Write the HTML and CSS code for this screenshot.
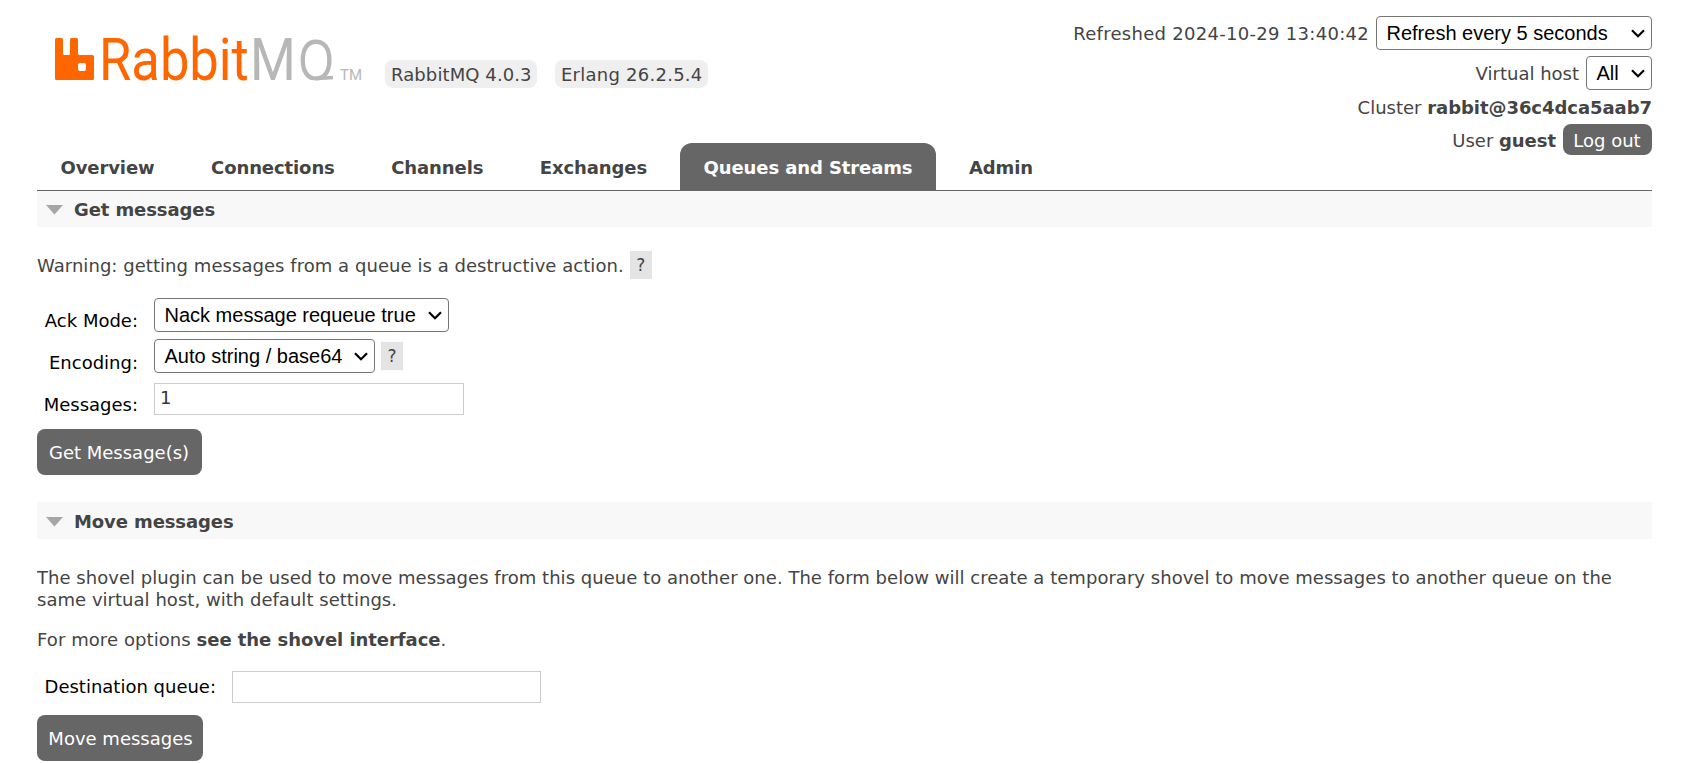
FILE: index.html
```html
<!DOCTYPE html>
<html lang="en">
<head>
<meta charset="utf-8">
<title>RabbitMQ Management</title>
<link rel="stylesheet" href="styles.css">
</head>
<body>
<header class="header">
  <div class="header-main">
    <div class="brand">
      <svg class="logo" width="308" height="46" viewBox="0 0 308 46" role="img" aria-label="RabbitMQ">
        <path fill="#f60" fill-rule="evenodd" d="M1.500 2h5q1.500 0 1.500 1.500v14q0 1.500 1.500 1.500h4q1.500 0 1.500-1.500v-14q0-1.500 1.500-1.500h5q1.500 0 1.500 1.500v14q0 1.500 1.500 1.500h13q1.500 0 1.500 1.500v22q0 1.500-1.500 1.500h-36q-1.500 0-1.500-1.500v-39q0-1.500 1.500-1.500zM25 27q-2 0-2 2v4q0 2 2 2h4q2 0 2-2v-4q0-2-2-2z"/>
        <g transform="translate(44 44) scale(.89 1)"><text class="logo-name"><tspan fill="#f60">Rabbit</tspan><tspan fill="#b7b7b7" dx="1.500">M</tspan></text></g>
        <clipPath id="q-clip"><rect x="240" y="-2" width="45" height="46.500"/></clipPath>
        <g clip-path="url(#q-clip)"><g transform="translate(243.500 43.500) scale(.78 1)"><text class="logo-q" fill="#b7b7b7">Q</text></g></g>
        <path d="M261 42.300h6l11-.8" fill="none" stroke="#b7b7b7" stroke-width="3.600"/>
        <text class="logo-tm" x="285" y="44" fill="#b7b7b7">TM</text>
      </svg>
      <span class="version v-server">RabbitMQ 4.0.3</span>
      <span class="version v-erlang">Erlang 26.2.5.4</span>
    </div>
    <nav class="tabs">
      <a class="tab">Overview</a>
      <a class="tab">Connections</a>
      <a class="tab">Channels</a>
      <a class="tab">Exchanges</a>
      <a class="tab selected">Queues and Streams</a>
      <a class="tab">Admin</a>
    </nav>
  </div>
  <div class="status">
    <div class="status-row">
      <span class="refreshed">Refreshed 2024-10-29 13:40:42</span>
      <span class="select w-refresh">Refresh every 5 seconds<svg class="chevron" width="14" height="9" viewBox="0 0 14 9"><path d="M1 1.200l6 6 6-6"/></svg></span>
    </div>
    <div class="status-row">
      <span>Virtual host</span>
      <span class="select w-vhost">All<svg class="chevron" width="14" height="9" viewBox="0 0 14 9"><path d="M1 1.200l6 6 6-6"/></svg></span>
    </div>
    <div class="status-row cluster"><span>Cluster <b>rabbit@36c4dca5aab7</b></span></div>
    <div class="status-row user"><span>User <b>guest</b></span><button class="logout">Log out</button></div>
  </div>
</header>
<main>
  <h2 class="section-title"><svg class="triangle" width="17" height="10" viewBox="0 0 17 10"><path d="M0 0h17l-8.500 9.500z"/></svg>Get messages</h2>
  <p class="warning">Warning: getting messages from a queue is a destructive action. <span class="help">?</span></p>
  <div class="form">
    <div class="row row-ack"><label>Ack Mode:</label><span class="select w-ack">Nack message requeue true<svg class="chevron" width="14" height="9" viewBox="0 0 14 9"><path d="M1 1.200l6 6 6-6"/></svg></span></div>
    <div class="row row-enc"><label>Encoding:</label><span class="select w-enc">Auto string / base64<svg class="chevron" width="14" height="9" viewBox="0 0 14 9"><path d="M1 1.200l6 6 6-6"/></svg></span><span class="help">?</span></div>
    <div class="row row-count"><label>Messages:</label><input class="count" type="text" value="1"></div>
  </div>
  <button class="action get">Get Message(s)</button>
  <h2 class="section-title second"><svg class="triangle" width="17" height="10" viewBox="0 0 17 10"><path d="M0 0h17l-8.500 9.500z"/></svg>Move messages</h2>
  <p class="shovel">The shovel plugin can be used to move messages from this queue to another one. The form below will create a temporary shovel to move messages to another queue on the same virtual host, with default settings.</p>
  <p class="more">For more options <b>see the shovel interface</b>.</p>
  <div class="row row-dest"><label>Destination queue:</label><input class="dest" type="text"></div>
  <button class="action move">Move messages</button>
</main>
</body>
</html>
```

FILE: styles.css
```css
* { box-sizing: border-box; }

body {
  margin: 0 34px 0 37px;
  background: #fff;
  color: #444;
  font: 18px/22px "DejaVu Sans", Verdana, sans-serif;
  overflow: hidden;
}

b { font-weight: bold; letter-spacing: -0.05px; }
p { margin: 0; letter-spacing: 0.03px; }
button { border: 0; background: #666; color: #fff; font: inherit; border-radius: 8px; padding: 0; }

.header {
  display: flex;
  justify-content: space-between;
  height: 191px;
  border-bottom: 1px solid #666;
}
.header-main { display: flex; flex-direction: column; justify-content: space-between; }

.brand { display: flex; align-items: flex-start; padding: 36px 0 0 18px; }
.logo { margin-right: 22px; overflow: visible; }
.logo-name { font: 400 59px Roboto, sans-serif; }
.logo-q { font: 400 58px "Liberation Sans", Arial, sans-serif; }
.logo-tm { font: 400 15px Roboto, sans-serif; }
.version {
  height: 28px;
  margin-top: 24px;
  padding: 1px 0 0 6px;
  line-height: 27px;
  background: #efefef;
  border-radius: 8px;
}
.v-server { width: 152px; letter-spacing: 0.1px; margin-right: 18px; }
.v-erlang { width: 153px; letter-spacing: 0.25px; }

.tabs { display: flex; gap: 9.500px; }
.tab {
  height: 47px;
  padding: 0 23.500px;
  line-height: 50px;
  font-weight: bold;
  letter-spacing: -0.1px;
}
.tab.selected { background: #666; color: #fff; border-radius: 12px 12px 0 0; }

.status { display: flex; flex-direction: column; padding-top: 16px; }
.status-row { display: flex; justify-content: flex-end; align-items: center; gap: 7px; height: 34px; margin-bottom: 6px; }
.status-row > span:first-child { padding-top: 1px; }
.status-row:nth-child(2) { margin-bottom: 0; }
.status-row.cluster { margin-bottom: 0; }
.status-row.user { height: 31px; margin-bottom: 0; }
.status-row.user > span { padding-top: 3px; }
.refreshed { letter-spacing: 0.29px; }
.logout { width: 89px; height: 31px; padding: 2px 1px 0 0; }

.select {
  display: flex;
  align-items: center;
  justify-content: space-between;
  height: 34px;
  padding: 0 6px 0 9.500px;
  border: 1px solid #767676;
  border-radius: 4px;
  background: #fff;
  color: #000;
  font: 20px/30px "Liberation Sans", Arial, sans-serif;
}
.chevron path { fill: none; stroke: #000; stroke-width: 2.200; }
.w-refresh { width: 276px; }
.w-vhost { width: 66px; }
.w-ack { width: 295px; }
.w-enc { width: 221px; }

.section-title {
  display: flex;
  align-items: center;
  gap: 11px;
  height: 36px;
  margin: 0;
  padding: 2px 0 0 9px;
  background: #f8f8f8;
  font-size: 18px;
  line-height: 34px;
  letter-spacing: -0.1px;
}
.triangle { fill: #a6a6a6; }

.help {
  display: inline-block;
  width: 22px;
  height: 28px;
  background: #e4e4e4;
  color: #444;
  font-size: 17px;
  line-height: 29px;
  text-align: center;
}

.warning { display: flex; align-items: center; gap: 6px; height: 28px; margin: 24px 0 19px; line-height: 24px; padding-top: 1px; letter-spacing: 0.05px; }
.warning .help { margin-top: -1px; line-height: 29px; }
.row { display: flex; align-items: flex-start; color: #000; }
.row label { width: 101px; margin-right: 16px; padding-top: 12px; line-height: 22px; text-align: right; }
.row-ack { height: 41px; }
.row-enc { height: 44px; }
.row-enc label { padding-top: 13px; }
.row-enc .help { margin: 3px 0 0 6px; }
.row-count { height: 32px; }
.row-count label { padding-top: 11px; }

input {
  height: 32px;
  margin: 0;
  padding: 0 5px 4px;
  border: 1px solid #ccc;
  color: #333;
  font: 18px "DejaVu Sans", Verdana, sans-serif;
}
.count { width: 310px; }
.dest { width: 309px; }

.action { display: block; height: 46px; padding-top: 2px; }
.get { width: 165px; margin-top: 14px; padding-right: 1px; }
.move { width: 166px; margin-top: 12px; padding-left: 1px; }

.second { height: 37px; margin-top: 27px; }
.shovel { margin-top: 28px; }
.more { margin-top: 18px; letter-spacing: 0.08px; }
.row-dest { margin-top: 20px; }
.row-dest label { width: 179px; margin-right: 16px; padding-top: 5px; }
```
